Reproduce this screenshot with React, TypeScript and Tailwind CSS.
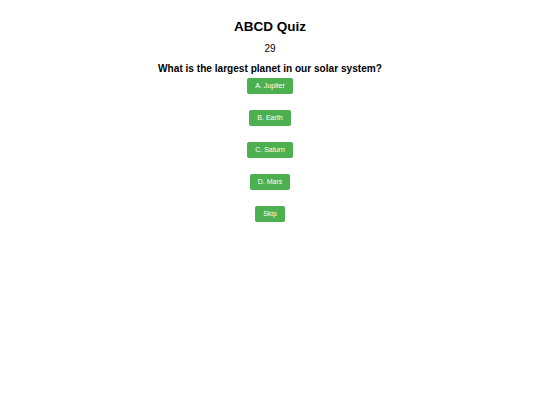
export default function App() {
  const options = ["A. Jupiter", "B. Earth", "C. Saturn", "D. Mars"];
  return (
    <div className="min-h-[405px] w-full bg-white font-['Liberation_Sans',Arial,sans-serif] text-black">
      <div className="flex flex-col items-center pt-[18px]">
        <h1 className="text-[13.5px] font-bold leading-[18px]">ABCD Quiz</h1>
        <div className="mt-[7px] text-[10px] leading-[12px]">29</div>
        <h2 className="mt-[7px] text-[10.1px] font-bold leading-[13px]">
          What is the largest planet in our solar system?
        </h2>
        <div className="mt-[3px] flex flex-col items-center gap-[16px]">
          {options.map((o) => (
            <button
              key={o}
              className="rounded-[2px] bg-[#4CAF50] px-[8px] py-[4px] text-[7px] leading-[8px] text-white"
            >
              {o}
            </button>
          ))}
          <button className="rounded-[2px] bg-[#4CAF50] px-[8px] py-[4px] text-[7px] leading-[8px] text-white">
            Skip
          </button>
        </div>
      </div>
    </div>
  );
}
